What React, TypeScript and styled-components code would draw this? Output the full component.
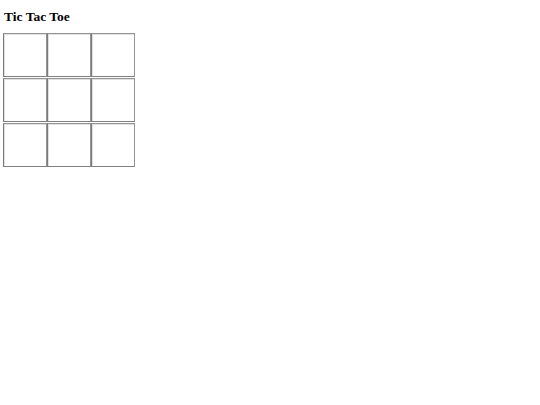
import React from "react";
import styled, { createGlobalStyle } from "styled-components";

const GlobalStyle = createGlobalStyle`
  html, body {
    margin: 0;
    padding: 0;
    background: #ffffff;
  }
  body {
    font-family: "Liberation Serif", "Times New Roman", serif;
    color: #000000;
  }
`;

const Page = styled.div`
  padding: 9px 3px 0 3px;
`;

const Title = styled.h3`
  margin: 0 0 9px 1px;
  font-size: 13.5px;
  line-height: 15px;
  font-weight: bold;
`;

const Board = styled.div`
  display: grid;
  grid-template-columns: repeat(3, 44px);
  grid-auto-rows: 44px;
  column-gap: 0;
  row-gap: 1px;
`;

const Cell = styled.button`
  box-sizing: border-box;
  width: 44px;
  height: 44px;
  margin: 0;
  padding: 0;
  background: #ffffff;
  border: 1px solid #959595;
  border-left-color: #7a7a7a;
  border-bottom-color: #808080;
  box-shadow: inset 1px 1px 0 #e0e0e0;
  font-family: "Liberation Serif", serif;
  font-size: 24px;
`;

const cells = Array.from({ length: 9 }, (_, i) => i);

export default function App() {
  return (
    <>
      <GlobalStyle />
      <Page>
        <Title>Tic Tac Toe</Title>
        <Board>
          {cells.map((i) => (
            <Cell key={i} aria-label={`cell ${i + 1}`} />
          ))}
        </Board>
      </Page>
    </>
  );
}
